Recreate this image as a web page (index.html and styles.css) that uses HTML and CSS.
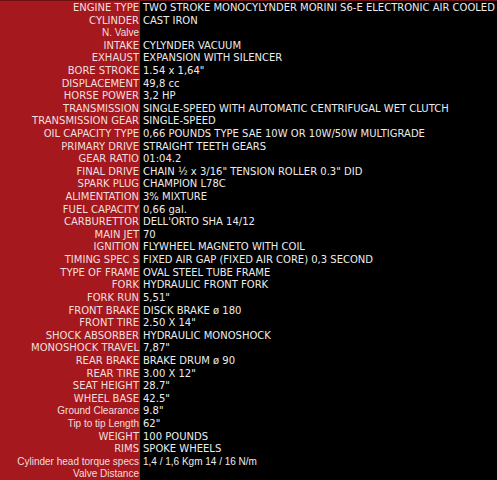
FILE: index.html
```html
<!DOCTYPE html>
<html>
<head>
<meta charset="utf-8">
<link rel="stylesheet" href="styles.css">
</head>
<body>
<div class="specs">
<div class="k">ENGINE TYPE</div><div class="v">TWO STROKE MONOCYLYNDER MORINI S6-E ELECTRONIC AIR COOLED</div>
<div class="k">CYLINDER</div><div class="v">CAST IRON</div>
<div class="k mixed">N. Valve</div><div class="v"></div>
<div class="k">INTAKE</div><div class="v">CYLYNDER VACUUM</div>
<div class="k">EXHAUST</div><div class="v">EXPANSION WITH SILENCER</div>
<div class="k">BORE STROKE</div><div class="v">1.54 x 1,64"</div>
<div class="k">DISPLACEMENT</div><div class="v">49,8 cc</div>
<div class="k">HORSE POWER</div><div class="v">3,2 HP</div>
<div class="k">TRANSMISSION</div><div class="v">SINGLE-SPEED WITH AUTOMATIC CENTRIFUGAL WET CLUTCH</div>
<div class="k">TRANSMISSION GEAR</div><div class="v">SINGLE-SPEED</div>
<div class="k">OIL CAPACITY TYPE</div><div class="v">0,66 POUNDS TYPE SAE 10W OR 10W/50W MULTIGRADE</div>
<div class="k">PRIMARY DRIVE</div><div class="v">STRAIGHT TEETH GEARS</div>
<div class="k">GEAR RATIO</div><div class="v">01:04.2</div>
<div class="k">FINAL DRIVE</div><div class="v">CHAIN ½ x 3/16" TENSION ROLLER 0.3" DID</div>
<div class="k">SPARK PLUG</div><div class="v">CHAMPION L78C</div>
<div class="k">ALIMENTATION</div><div class="v">3% MIXTURE</div>
<div class="k">FUEL CAPACITY</div><div class="v">0,66 gal.</div>
<div class="k">CARBURETTOR</div><div class="v">DELL'ORTO SHA 14/12</div>
<div class="k">MAIN JET</div><div class="v">70</div>
<div class="k">IGNITION</div><div class="v">FLYWHEEL MAGNETO WITH COIL</div>
<div class="k">TIMING SPEC S</div><div class="v">FIXED AIR GAP (FIXED AIR CORE) 0,3 SECOND</div>
<div class="k">TYPE OF FRAME</div><div class="v">OVAL STEEL TUBE FRAME</div>
<div class="k">FORK</div><div class="v">HYDRAULIC FRONT FORK</div>
<div class="k">FORK RUN</div><div class="v">5,51"</div>
<div class="k">FRONT BRAKE</div><div class="v">DISCK BRAKE ø 180</div>
<div class="k">FRONT TIRE</div><div class="v">2.50 X 14"</div>
<div class="k">SHOCK ABSORBER</div><div class="v">HYDRAULIC MONOSHOCK</div>
<div class="k">MONOSHOCK TRAVEL</div><div class="v">7,87"</div>
<div class="k">REAR BRAKE</div><div class="v">BRAKE DRUM ø 90</div>
<div class="k">REAR TIRE</div><div class="v">3.00 X 12"</div>
<div class="k">SEAT HEIGHT</div><div class="v">28.7"</div>
<div class="k">WHEEL BASE</div><div class="v">42.5"</div>
<div class="k mixed">Ground Clearance</div><div class="v">9.8"</div>
<div class="k mixed">Tip to tip Length</div><div class="v">62"</div>
<div class="k">WEIGHT</div><div class="v">100 POUNDS</div>
<div class="k">RIMS</div><div class="v">SPOKE WHEELS</div>
<div class="k mixed">Cylinder head torque specs</div><div class="v mixed">1,4 / 1,6 Kgm 14 / 16 N/m</div>
<div class="k mixed">Valve Distance</div><div class="v"></div>
</div>
</body>
</html>
```
FILE: styles.css
```css
html, body {
  margin: 0;
  padding: 0;
  background: #000;
}
body {
  width: 497px;
  height: 480px;
  overflow: hidden;
  font-family: "DejaVu Sans", Verdana, sans-serif;
  font-size: 10px;
}
.specs {
  display: grid;
  grid-template-columns: 140px 1fr;
  grid-template-rows: repeat(38, 1fr);
  height: 479px;
  border-top: 1px solid #6e0f12;
  background: linear-gradient(to right, #a5191e 140px, #000 140px);
}
.k {
  color: #f2dede;
  text-align: right;
  padding-right: 1px;
  padding-top: 2px;
  white-space: nowrap;
  overflow: hidden;
  line-height: 10.6px;
}
.v {
  color: #ececec;
  padding-left: 3px;
  padding-top: 2px;
  white-space: nowrap;
  line-height: 10.6px;
}
.mixed {
  font-family: "Liberation Sans", Arial, sans-serif;
}
```
